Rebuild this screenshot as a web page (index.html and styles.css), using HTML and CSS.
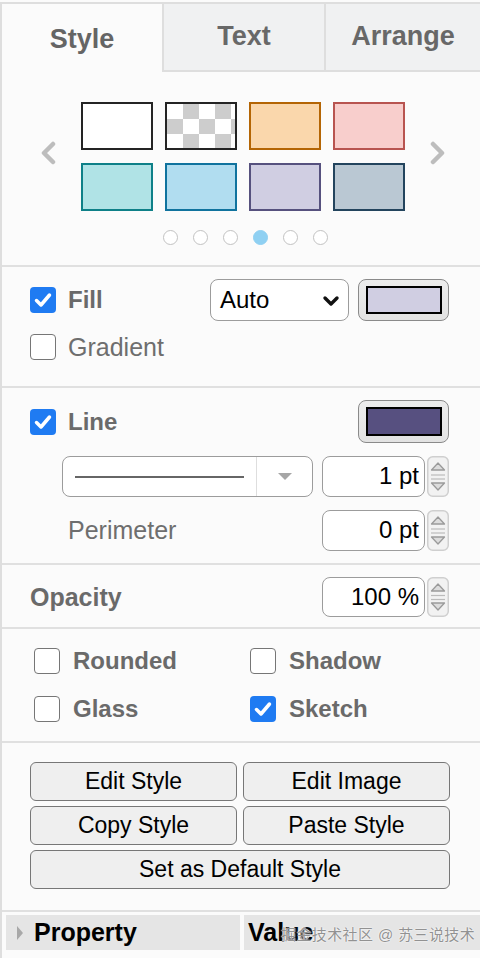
FILE: index.html
```html
<!DOCTYPE html>
<html>
<head>
<meta charset="utf-8">
<link rel="stylesheet" href="styles.css">
</head>
<body>
<div class="panel">
  <div class="tabs">
    <div class="tab active">Style</div>
    <div class="tab">Text</div>
    <div class="tab">Arrange</div>
  </div>

  <div class="section sw-section">
    <div class="carousel">
      <svg class="chev" width="18" height="24" viewBox="0 0 18 24"><polyline points="13,3 4,12 13,21" fill="none" stroke="#bdbdbd" stroke-width="4.5" stroke-linejoin="round" stroke-linecap="round"/></svg>
      <div class="swatches">
        <div class="sw sw-white"></div>
        <div class="sw sw-none"></div>
        <div class="sw sw-orange"></div>
        <div class="sw sw-red"></div>
        <div class="sw sw-teal"></div>
        <div class="sw sw-blue"></div>
        <div class="sw sw-purple"></div>
        <div class="sw sw-slate"></div>
      </div>
      <svg class="chev" width="18" height="24" viewBox="0 0 18 24"><polyline points="5,3 14,12 5,21" fill="none" stroke="#bdbdbd" stroke-width="4.5" stroke-linejoin="round" stroke-linecap="round"/></svg>
    </div>
    <div class="dots">
      <span class="dot"></span><span class="dot"></span><span class="dot"></span><span class="dot on"></span><span class="dot"></span><span class="dot"></span>
    </div>
  </div>

  <div class="section fill-section">
    <div class="row">
      <div class="check">
        <span class="box on"><svg width="26" height="26" viewBox="0 0 26 26"><polyline points="6.5,13.5 11,18 19.5,8" fill="none" stroke="#fff" stroke-width="3.5" stroke-linecap="round" stroke-linejoin="round"/></svg></span>
        <span class="lbl bold">Fill</span>
      </div>
      <div class="spacer"></div>
      <div class="select">
        <span>Auto</span>
        <svg width="18" height="12" viewBox="0 0 18 12"><polyline points="3,3 9,9 15,3" fill="none" stroke="#111" stroke-width="3.4" stroke-linecap="round" stroke-linejoin="round"/></svg>
      </div>
      <div class="colorbtn"><span class="inner c-fill"></span></div>
    </div>
    <div class="row">
      <div class="check">
        <span class="box"></span>
        <span class="lbl">Gradient</span>
      </div>
    </div>
  </div>

  <div class="section line-section">
    <div class="row">
      <div class="check">
        <span class="box on"><svg width="26" height="26" viewBox="0 0 26 26"><polyline points="6.5,13.5 11,18 19.5,8" fill="none" stroke="#fff" stroke-width="3.5" stroke-linecap="round" stroke-linejoin="round"/></svg></span>
        <span class="lbl bold">Line</span>
      </div>
      <div class="spacer"></div>
      <div class="colorbtn tall"><span class="inner c-line"></span></div>
    </div>
    <div class="row sub">
      <div class="pattern">
        <div class="pat-line"><span></span></div>
        <div class="pat-arrow"><svg width="16" height="8" viewBox="0 0 16 8"><polygon points="1,1 15,1 8,8" fill="#a6a6a6"/></svg></div>
      </div>
      <div class="spacer"></div>
      <div class="spin"><div class="num">1 pt</div>
        <svg class="stepper" width="22" height="41" viewBox="0 0 22 41"><rect x="0.75" y="0.75" width="20.5" height="39.5" rx="5" fill="#f2f2f2" stroke="#cfcfcf" stroke-width="1.5"/><polygon points="11,7 17.5,14 4.5,14" fill="#dcdcdc" stroke="#9a9a9a" stroke-width="1.3" stroke-linejoin="round"/><line x1="4" y1="19" x2="18" y2="19" stroke="#bbb" stroke-width="1.2"/><line x1="4" y1="23" x2="18" y2="23" stroke="#bbb" stroke-width="1.2"/><polygon points="4.5,27 17.5,27 11,34" fill="#dcdcdc" stroke="#9a9a9a" stroke-width="1.3" stroke-linejoin="round"/></svg>
      </div>
    </div>
    <div class="row sub">
      <span class="lbl perim">Perimeter</span>
      <div class="spacer"></div>
      <div class="spin"><div class="num">0 pt</div>
        <svg class="stepper" width="22" height="41" viewBox="0 0 22 41"><rect x="0.75" y="0.75" width="20.5" height="39.5" rx="5" fill="#f2f2f2" stroke="#cfcfcf" stroke-width="1.5"/><polygon points="11,7 17.5,14 4.5,14" fill="#dcdcdc" stroke="#9a9a9a" stroke-width="1.3" stroke-linejoin="round"/><line x1="4" y1="19" x2="18" y2="19" stroke="#bbb" stroke-width="1.2"/><line x1="4" y1="23" x2="18" y2="23" stroke="#bbb" stroke-width="1.2"/><polygon points="4.5,27 17.5,27 11,34" fill="#dcdcdc" stroke="#9a9a9a" stroke-width="1.3" stroke-linejoin="round"/></svg>
      </div>
    </div>
  </div>

  <div class="section op-section">
    <div class="row">
      <span class="lbl bold">Opacity</span>
      <div class="spacer"></div>
      <div class="spin short"><div class="num">100 %</div>
        <svg class="stepper" width="22" height="40" viewBox="0 0 22 40"><rect x="0.75" y="0.75" width="20.5" height="38.5" rx="5" fill="#f2f2f2" stroke="#cfcfcf" stroke-width="1.5"/><polygon points="11,7 17.5,14 4.5,14" fill="#dcdcdc" stroke="#9a9a9a" stroke-width="1.3" stroke-linejoin="round"/><line x1="4" y1="18.5" x2="18" y2="18.5" stroke="#bbb" stroke-width="1.2"/><line x1="4" y1="22.5" x2="18" y2="22.5" stroke="#bbb" stroke-width="1.2"/><polygon points="4.5,26 17.5,26 11,33" fill="#dcdcdc" stroke="#9a9a9a" stroke-width="1.3" stroke-linejoin="round"/></svg>
      </div>
    </div>
  </div>

  <div class="section opts-section">
    <div class="check"><span class="box"></span><span class="lbl bold">Rounded</span></div>
    <div class="check"><span class="box"></span><span class="lbl bold">Shadow</span></div>
    <div class="check"><span class="box"></span><span class="lbl bold">Glass</span></div>
    <div class="check">
      <span class="box on"><svg width="26" height="26" viewBox="0 0 26 26"><polyline points="6.5,13.5 11,18 19.5,8" fill="none" stroke="#fff" stroke-width="3.5" stroke-linecap="round" stroke-linejoin="round"/></svg></span>
      <span class="lbl bold">Sketch</span>
    </div>
  </div>

  <div class="section btn-section">
    <button class="btn">Edit Style</button>
    <button class="btn">Edit Image</button>
    <button class="btn">Copy Style</button>
    <button class="btn">Paste Style</button>
    <button class="btn wide">Set as Default Style</button>
  </div>

  <div class="props">
    <div class="prop-head">
      <svg width="8" height="16" viewBox="0 0 8 16"><polygon points="1,1 7,8 1,15" fill="#a8a8a8"/></svg>
      <span>Property</span>
    </div>
    <div class="prop-head value"><span>Value</span></div>
    <div class="watermark">掘金技术社区 @ 苏三说技术</div>
  </div>
</div>
</body>
</html>
```

FILE: styles.css
```css
* { box-sizing: border-box; }
html, body { margin: 0; padding: 0; }
body {
  background: #fbfbfb;
  font-family: "Liberation Sans", Arial, "Noto Sans CJK SC", sans-serif;
  width: 480px;
  height: 958px;
  overflow: hidden;
}
.panel {
  margin-top: 2px;
  border-top: 2px solid #dedede;
  border-left: 2px solid #dedede;
  background: #fbfbfb;
  height: 956px;
}
.tabs {
  display: grid;
  grid-template-columns: 160px 162px 1fr;
  height: 68px;
}
.tab {
  display: flex;
  align-items: center;
  justify-content: center;
  font-size: 27px;
  font-weight: bold;
  color: #686868;
  background: #f0f1f2;
  border-left: 2px solid #dedede;
  border-bottom: 2px solid #dedede;
  padding-bottom: 2px;
}
.tab.active {
  background: #fbfbfb;
  border-left: none;
  border-bottom: none;
  padding-top: 2px;
  padding-bottom: 0;
  color: #656565;
}
.section {
  border-bottom: 2px solid #e0e0e0;
  padding-left: 28px;
  padding-right: 31px;
}
.sw-section {
  padding: 30px 0 20px 0;
}
.carousel {
  display: flex;
  align-items: center;
  justify-content: center;
  gap: 23px;
  padding-left: 4px;
}
.chev { display: block; margin-top: -8px; }
.swatches {
  display: grid;
  grid-template-columns: repeat(4, 72px);
  grid-auto-rows: 48px;
  column-gap: 12px;
  row-gap: 13px;
}
.sw { border: 2px solid #222; }
.sw-white { background: #fff; border-color: #242424; }
.sw-none {
  border-color: #242424;
  background-color: #fff;
  background-image: conic-gradient(#cdcdcd 25%, #fff 0 50%, #cdcdcd 0 75%, #fff 0);
  background-size: 32px 30px;
  background-position: 0 0;
}
.sw-orange { background: #fad7ac; border-color: #b46504; }
.sw-red { background: #f8cecc; border-color: #b85450; }
.sw-teal { background: #b0e3e6; border-color: #0e8088; }
.sw-blue { background: #b1ddf0; border-color: #10739e; }
.sw-purple { background: #d0cee2; border-color: #56517e; }
.sw-slate { background: #bac8d3; border-color: #23445d; }
.dots {
  display: flex;
  justify-content: center;
  gap: 15px;
  margin-top: 19px;
  padding-left: 8px;
}
.dot {
  width: 15px;
  height: 15px;
  border-radius: 50%;
  border: 1.5px solid #c2c2c2;
  background: #fff;
}
.dot.on { background: #8fd0f2; border-color: #8fd0f2; }

.row {
  display: flex;
  align-items: center;
}
.spacer { flex: 1; }
.check {
  display: flex;
  align-items: center;
  gap: 12px;
}
.box {
  width: 26px;
  height: 26px;
  border-radius: 4px;
  border: 1.5px solid #767676;
  background: #fff;
  display: block;
  flex: none;
}
.box.on {
  background: #1f7bf2;
  border: none;
}
.box svg { display: block; }
.lbl {
  font-size: 25px;
  color: #6e6e6e;
}
.lbl.bold {
  font-weight: bold;
  font-size: 24px;
  color: #6a6a6a;
}

.fill-section { padding-top: 12px; padding-bottom: 26px; }
.fill-section .row:first-child { height: 42px; }
.fill-section .row + .row { margin-top: 13px; height: 26px; }

.select {
  width: 139px;
  height: 42px;
  border: 1.5px solid #9c9c9c;
  border-radius: 8px;
  background: #fff;
  display: flex;
  align-items: center;
  justify-content: space-between;
  padding: 0 8px 0 9px;
  font-size: 24px;
  color: #000;
  margin-right: 9px;
}
.select svg { display: block; margin-top: 2px; }
.colorbtn {
  width: 91px;
  height: 42px;
  border: 1.5px solid #8a8a8a;
  border-radius: 8px;
  background: linear-gradient(#ececec, #e2e2e2);
  padding: 6px 6.5px;
  display: flex;
}
.colorbtn.tall { height: 43px; }
.inner {
  flex: 1;
  border: 2px solid #000;
}
.c-fill { background: #d0cee2; }
.c-line { background: #575080; }

.line-section { padding-top: 12px; padding-bottom: 12px; }
.line-section .row:first-child { height: 43px; }
.line-section .row.sub { margin-top: 13px; height: 41px; }
.pattern {
  margin-left: 32px;
  width: 251px;
  height: 41px;
  border: 1.5px solid #9c9c9c;
  border-radius: 8px;
  background: #fff;
  display: flex;
}
.pat-line {
  width: 194px;
  border-right: 1.5px solid #dedede;
  display: flex;
  align-items: center;
  padding-left: 12px;
}
.pat-line span {
  display: block;
  width: 169px;
  height: 2px;
  background: #666;
}
.pat-arrow {
  flex: 1;
  display: flex;
  align-items: center;
  justify-content: center;
}
.pat-arrow svg { display: block; margin-top: -2px; }
.perim { margin-left: 38px; }
.spin {
  display: flex;
  align-items: center;
  gap: 2px;
}
.num {
  width: 103px;
  height: 41px;
  border: 1.5px solid #9c9c9c;
  border-radius: 8px;
  background: #fff;
  font-size: 24px;
  color: #000;
  text-align: right;
  padding-right: 5px;
  line-height: 38px;
}
.spin.short .num { height: 40px; line-height: 37px; }
.stepper { display: block; }

.op-section { padding-top: 12px; padding-bottom: 10px; }
.op-section .row { height: 40px; }
.op-section .lbl.bold { font-size: 25px; }

.opts-section {
  display: grid;
  grid-template-columns: 216px 1fr;
  row-gap: 22px;
  padding: 19px 0 19px 32px;
}
.opts-section .check { height: 26px; gap: 13px; }

.btn-section {
  display: grid;
  grid-template-columns: 207px 207px;
  column-gap: 6px;
  row-gap: 5px;
  grid-auto-rows: 39px;
  padding: 19px 0 21px 28px;
}
.btn {
  font-family: "Liberation Sans", Arial, sans-serif;
  font-size: 23px;
  color: #000;
  background: #efefef;
  border: 1.5px solid #777;
  border-radius: 6px;
  padding: 0;
  margin: 0;
}
.btn.wide { grid-column: 1 / 3; }

.props {
  position: relative;
  display: grid;
  grid-template-columns: 234px 1fr;
  column-gap: 4px;
  margin-top: 3px;
  padding-left: 4px;
  height: 35px;
}
.prop-head {
  background: #e5e5e5;
  display: flex;
  align-items: center;
  gap: 10px;
  padding-left: 10px;
  font-size: 25px;
  font-weight: bold;
  color: #000;
}
.prop-head.value { padding-left: 4px; }
.prop-head svg { display: block; }
.watermark {
  position: absolute;
  left: 279px;
  top: 8px;
  font-size: 15px;
  color: #929292;
  letter-spacing: 0.4px;
  text-shadow: 0 0 2px #fff, 0 0 1px #fff;
  white-space: nowrap;
}
```
